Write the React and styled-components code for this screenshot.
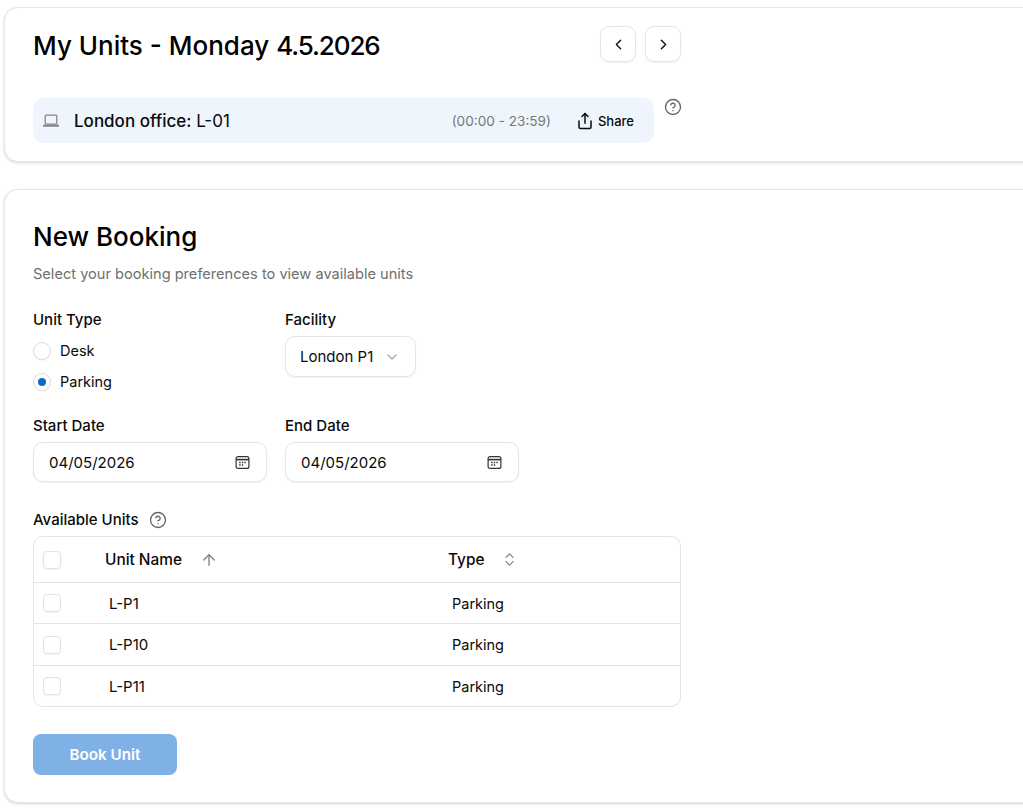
import React from "react";
import styled, { createGlobalStyle } from "styled-components";
import { ChevronLeft, ChevronRight, Share, CircleHelp, ChevronDown, ArrowUp, ChevronsUpDown } from "lucide-react";

const Global = createGlobalStyle`
  html, body { margin: 0; padding: 0; background: #fff; overflow: hidden; }
  body { font-family: "Inter", "Noto Sans", sans-serif; color: #0a0a0a; }
`;
const Page = styled.div`
  width: 1023px; height: 811px; overflow: hidden; box-sizing: border-box;
  padding: 7px 0 0 4px; display: flex; flex-direction: column; gap: 27px;
`;
const Card = styled.section`
  box-sizing: border-box; width: 1060px; height: ${p => p.$h}px; background: #fff;
  border: 1px solid #e6e6e6; border-radius: 14px; box-shadow: 0 1px 3px rgba(0,0,0,.16);
  padding: ${p => p.$pad};
`;
const TitleRow = styled.div`display: flex; align-items: flex-start; height: 38px; width: 648px; justify-content: space-between;`;
const Title = styled.h1`margin: 2px 0 0; font-size: 26px; font-weight: 500; line-height: 36px; color: #000;`;
const TitleDate = styled.span`letter-spacing: -1.1px;`;
const NavGroup = styled.div`display: flex; gap: 9px;`;
const NavButton = styled.button`
  width: 36px; height: 36px; padding: 0; background: #fff; border: 1px solid #e4e4e4; border-radius: 9px;
  display: flex; align-items: center; justify-content: center; color: #111; box-shadow: 0 1px 2px rgba(0,0,0,.06);
`;
const BookingRow = styled.div`display: flex; margin-top: 34px; gap: 10px; align-items: flex-start;`;
const Booking = styled.div`
  width: 621px; height: 45px; box-sizing: border-box; background: #eff5fc; border-radius: 10px;
  display: flex; align-items: center; padding: 0 20px 0 10px; font-size: 17px;
`;
const BookingName = styled.span`margin-left: 15px; flex: 1; b { font-weight: 500; }`;
const Hours = styled.span`font-size: 13.6px; color: #777; margin-right: 25px;`;
const ShareBtn = styled.span`display: flex; align-items: center; gap: 4px; font-size: 13px; font-weight: 500; padding-top: 1px;`;
const Help = styled(CircleHelp)`color: #666; flex: none;`;
const Heading = styled.h2`margin: 0; font-size: 26px; font-weight: 500; line-height: 36px; color: #000;`;
const Sub = styled.p`margin: 8px 0 0; font-size: 14.6px; line-height: 22px; color: #6f6f6f;`;
const FormRow = styled.div`display: flex; gap: 18px; margin-top: ${p => p.$mt}px; height: ${p => p.$h}px;`;
const Field = styled.div`width: 234px; display: flex; flex-direction: column; align-items: flex-start;`;
const Label = styled.label`font-size: 15px; font-weight: 500; line-height: 20px; display: flex; align-items: center; gap: 10px;`;
const RadioGroup = styled.div`margin-top: 5px;`;
const Radio = styled.div`display: flex; align-items: center; gap: 9px; height: 31px; font-size: 14.5px;`;
const RadioCircle = styled.span`
  width: 18px; height: 18px; box-sizing: border-box; border-radius: 50%; border: 1px solid #ddd; background: #fff;
  display: flex; align-items: center; justify-content: center;
  box-shadow: 0 1px 1px rgba(0,0,0,.05);
  &::after { content: ""; width: 8px; height: 8px; border-radius: 50%; background: ${p => p.$on ? "#1268c4" : "transparent"}; }
`;
const Select = styled.div`
  margin-top: 6px; height: 41px; width: 131px; box-sizing: border-box; border: 1px solid #e4e4e4; border-radius: 10px;
  display: flex; align-items: center; padding: 0 15px 0 14px; justify-content: space-between; font-size: 15px;
  box-shadow: 0 1px 2px rgba(0,0,0,.06);
`;
const DateBox = styled(Select)`width: 234px; height: 40px; padding: 0 16px 0 15px;`;
const TableLabel = styled.div`margin-top: 27px;`;
const Table = styled.div`
  margin-top: 6px; width: 648px; box-sizing: border-box; border: 1px solid #e4e4e4; border-radius: 10px;
`;
const Row = styled.div`
  box-sizing: border-box;
  display: grid; grid-template-columns: ${p => p.$head ? "62px 343px 1fr" : "66px 343px 1fr"};
  align-items: center; height: ${p => p.$height}px; padding-left: 9px; font-size: 15px;
  font-weight: ${p => p.$head ? 500 : 400}; border-bottom: ${p => p.$last ? "none" : "1px solid #e4e4e4"};
`;
const Check = styled.span`
  width: 18px; height: 18px; box-sizing: border-box; border: 1px solid #e2e2e2; border-radius: 4px; display: block;
  box-shadow: 0 1px 1px rgba(0,0,0,.05);
`;
const Sort = styled.span`display: flex; align-items: center; font-size: 15.4px; gap: ${p => p.$gap}px; svg { color: #7d828a; }`;
const Cell = styled.span``;
const TypeCell = styled.span`font-size: 14.5px;`;
const BookBtn = styled.button`
  margin-top: 27px; width: 144px; height: 41px; border: none; border-radius: 8px; background: #7fb0e6; color: #fff;
  font: 600 15.2px "Inter", sans-serif;
`;

const LaptopIcon = () => (
  <svg width="16" height="16" viewBox="0 0 16 16" fill="none" stroke="#858585" strokeWidth="1.3">
    <rect x="2.2" y="2.2" width="11.6" height="9" rx="1" />
    <path d="M.8 12.8h14.4" strokeWidth="2" strokeLinecap="round" />
  </svg>
);
const CalendarIcon = () => (
  <svg width="15" height="15" viewBox="0 0 15 15" fill="none" stroke="#333" strokeWidth="1.2">
    <rect x="1.1" y="1.6" width="12.8" height="11.8" rx="2" />
    <path d="M1.1 4.6h12.8" strokeWidth="1.6" />
    <path d="M4.2 7.5h1.4M6.8 7.5h1.4M9.4 7.5h1.4M4.2 10h1.4M6.8 10h1.4" strokeWidth="1.4" />
  </svg>
);

export default function App() {
  return (
    <Page>
      <Global />
      <Card $h={155} $pad="18px 28px 0">
        <TitleRow>
          <Title>My Units - Monday <TitleDate>4.5.2026</TitleDate></Title>
          <NavGroup>
            <NavButton><ChevronLeft size={17} /></NavButton>
            <NavButton><ChevronRight size={17} /></NavButton>
          </NavGroup>
        </TitleRow>
        <BookingRow>
          <Booking>
            <LaptopIcon />
            <BookingName><b>London office:</b> L-01</BookingName>
            <Hours>(00:00 - 23:59)</Hours>
            <ShareBtn><Share size={18} strokeWidth={2} />Share</ShareBtn>
          </Booking>
          <Help size={18} strokeWidth={1.8} />
        </BookingRow>
      </Card>
      <Card $h={614} $pad="29px 28px 0">
        <Heading>New Booking</Heading>
        <Sub>Select your booking preferences to view available units</Sub>
        <FormRow $mt={25} $h={86}>
          <Field>
            <Label>Unit Type</Label>
            <RadioGroup>
              <Radio><RadioCircle />Desk</Radio>
              <Radio><RadioCircle $on />Parking</Radio>
            </RadioGroup>
          </Field>
          <Field>
            <Label>Facility</Label>
            <Select>London P1 <ChevronDown size={16} color="#aaa" /></Select>
          </Field>
        </FormRow>
        <FormRow $mt={20} $h={67}>
          <Field>
            <Label>Start Date</Label>
            <DateBox>04/05/2026 <CalendarIcon /></DateBox>
          </Field>
          <Field>
            <Label>End Date</Label>
            <DateBox>04/05/2026 <CalendarIcon /></DateBox>
          </Field>
        </FormRow>
        <TableLabel>
          <Label>Available Units <Help size={18} strokeWidth={1.8} /></Label>
        </TableLabel>
        <Table>
          <Row $head $height={46}>
            <Check />
            <Sort $gap={18}>Unit Name <ArrowUp size={18} strokeWidth={1.8} /></Sort>
            <Sort $gap={16}>Type <ChevronsUpDown size={17} strokeWidth={1.8} /></Sort>
          </Row>
          <Row $height={41}><Check /><Cell>L-P1</Cell><TypeCell>Parking</TypeCell></Row>
          <Row $height={42}><Check /><Cell>L-P10</Cell><TypeCell>Parking</TypeCell></Row>
          <Row $height={40} $last><Check /><Cell>L-P11</Cell><TypeCell>Parking</TypeCell></Row>
        </Table>
        <BookBtn>Book Unit</BookBtn>
      </Card>
    </Page>
  );
}
